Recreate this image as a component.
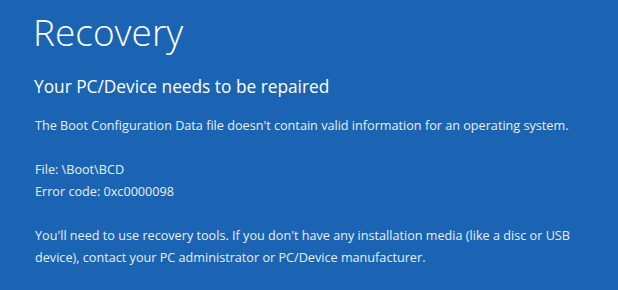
export default function App() {
  return (
    <div className="w-[618px] h-[290px] overflow-hidden bg-[#1b64b4] text-white font-['Open_Sans',sans-serif] pl-[33px] pt-[6px]">
      <h1 className="text-[37px] leading-[52px] font-light">Recovery</h1>
      <h2 className="mt-[16px] pl-[1px] text-[17.3px] leading-[26px] font-normal">Your PC/Device needs to be repaired</h2>

      <div className="mt-[14px] pl-[2px] text-[12.65px] leading-[22px] text-[#e8eef7]">
        <p>The Boot Configuration Data file doesn't contain valid information for an operating system.</p>

        <div className="mt-[22px]">
          <p>File: \Boot\BCD</p>
          <p>Error code: 0xc0000098</p>
        </div>

        <p className="mt-[22px]">
          You'll need to use recovery tools. If you don't have any installation media (like a disc or USB
          <br />
          device), contact your PC administrator or PC/Device manufacturer.
        </p>
      </div>
    </div>
  );
}
